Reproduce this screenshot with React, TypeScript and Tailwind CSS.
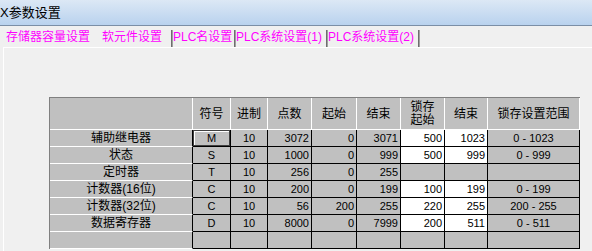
import React from "react";

const FONT = { fontFamily: '"Liberation Sans", "Noto Sans CJK SC", sans-serif' };

type Row = {
  name: string;
  sym: string;
  base: string;
  pts: string;
  start: string;
  end: string;
  lstart: string;
  lend: string;
  range: string;
  latch: boolean;
};

const rows: Row[] = [
  { name: "辅助继电器", sym: "M", base: "10", pts: "3072", start: "0", end: "3071", lstart: "500", lend: "1023", range: "0 - 1023", latch: true },
  { name: "状态", sym: "S", base: "10", pts: "1000", start: "0", end: "999", lstart: "500", lend: "999", range: "0 - 999", latch: true },
  { name: "定时器", sym: "T", base: "10", pts: "256", start: "0", end: "255", lstart: "", lend: "", range: "", latch: false },
  { name: "计数器(16位)", sym: "C", base: "10", pts: "200", start: "0", end: "199", lstart: "100", lend: "199", range: "0 - 199", latch: true },
  { name: "计数器(32位)", sym: "C", base: "10", pts: "56", start: "200", end: "255", lstart: "220", lend: "255", range: "200 - 255", latch: true },
  { name: "数据寄存器", sym: "D", base: "10", pts: "8000", start: "0", end: "7999", lstart: "200", lend: "511", range: "0 - 511", latch: true },
  { name: "", sym: "", base: "", pts: "", start: "", end: "", lstart: "", lend: "", range: "", latch: false },
];

const GRID = "grid grid-cols-[143px_38px_37px_44px_45px_44px_44px_43px_92px]";

function Tab({ w, label, sep }: { w: string; label: string; sep?: boolean }) {
  return (
    <div className={`${w} h-[21px] flex items-end`}>
      <div className="flex-1 h-[21px] flex items-center text-[12px] text-[#ff00ff]">{label}</div>
      {sep ? <div className="w-[2px] h-[17px] border-l border-[#6e6e6e] bg-[#a0a0a0]" /> : null}
    </div>
  );
}

export default function App() {
  const hdr = "bg-[#c0c0c0] border-r border-b border-white flex items-center justify-center text-[12px] text-black";
  const cell = "h-[17px] border-r border-b border-black flex items-center text-[11px] text-black";
  return (
    <div className="w-[592px] h-[251px] overflow-hidden bg-[#f0f0f0]" style={FONT}>
      {/* title bar */}
      <div className="h-[25px] bg-gradient-to-b from-[#dce8f5] to-[#b9d2ee] flex items-center text-[13px] text-black">
        X参数设置
      </div>
      <div className="h-px bg-[#7b8ea6]" />
      {/* tabs */}
      <div className="flex h-[21px] pl-[6px] bg-[#f0f0f0]">
        <Tab w="w-[96px]" label="存储器容量设置" />
        <Tab w="w-[71px]" label="软元件设置" sep />
        <Tab w="w-[63px]" label="PLC名设置" sep />
        <Tab w="w-[92px]" label="PLC系统设置(1)" sep />
        <Tab w="w-[92px]" label="PLC系统设置(2)" sep />
      </div>
      {/* panel */}
      <div className="h-[204px] border-t border-l border-white ml-[3px] pt-[49px] pl-[45px]">
        <div className="w-[531px] border-l border-t border-[#808080]">
          {/* header */}
          <div className={`${GRID} h-[32px]`}>
            <div className={hdr}></div>
            <div className={hdr}>符号</div>
            <div className={hdr}>进制</div>
            <div className={hdr}>点数</div>
            <div className={hdr}>起始</div>
            <div className={hdr}>结束</div>
            <div className={`${hdr} flex-col leading-[13px]`}>
              <span>锁存</span>
              <span>起始</span>
            </div>
            <div className={hdr}>结束</div>
            <div className={hdr}>锁存设置范围</div>
          </div>
          {rows.map((r, i) => {
            const latchBg = r.latch ? "bg-white" : "bg-[#c0c0c0]";
            return (
              <div key={i} className={GRID}>
                <div className="h-[17px] bg-[#c0c0c0] border-r border-black border-b border-b-white flex items-center justify-center text-[12px] text-black">
                  {r.name}
                </div>
                <div
                  className={`${cell} justify-center bg-[#c0c0c0] ${
                    i === 0 ? "shadow-[inset_1px_1px_0_#404040,inset_-1px_-1px_0_#404040,inset_2px_2px_0_#ffffff]" : ""
                  }`}
                >
                  {r.sym}
                </div>
                <div className={`${cell} justify-center bg-[#c0c0c0]`}>{r.base}</div>
                <div className={`${cell} justify-end pr-[2px] bg-[#c0c0c0]`}>{r.pts}</div>
                <div className={`${cell} justify-end pr-[2px] bg-[#c0c0c0]`}>{r.start}</div>
                <div className={`${cell} justify-end pr-[2px] bg-[#c0c0c0]`}>{r.end}</div>
                <div className={`${cell} justify-end pr-[2px] ${latchBg}`}>{r.lstart}</div>
                <div className={`${cell} justify-end pr-[2px] ${latchBg}`}>{r.lend}</div>
                <div className={`${cell} justify-center bg-[#c0c0c0]`}>{r.range}</div>
              </div>
            );
          })}
        </div>
      </div>
    </div>
  );
}
